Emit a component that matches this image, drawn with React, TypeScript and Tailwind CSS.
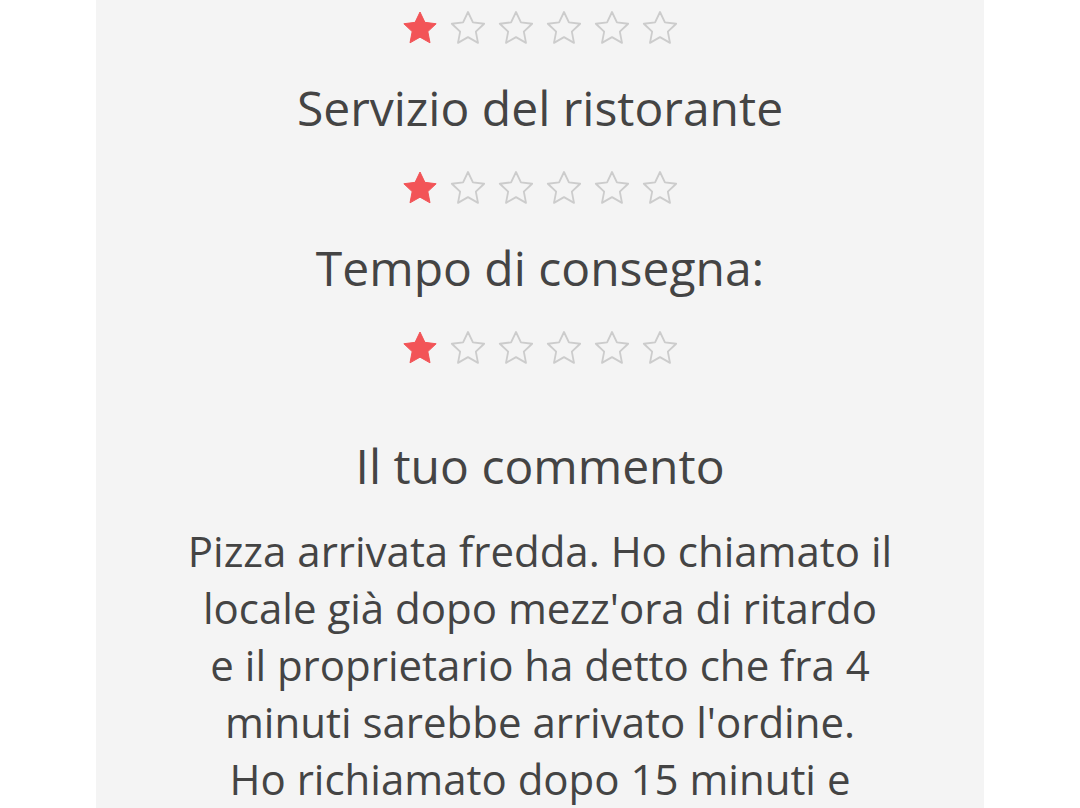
const ratings = ["Servizio del ristorante", "Tempo di consegna:"]

const commentLines = [
  "Pizza arrivata fredda. Ho chiamato il",
  "locale già dopo mezz'ora di ritardo",
  "e il proprietario ha detto che fra 4",
  "minuti sarebbe arrivato l'ordine.",
  "Ho richiamato dopo 15 minuti e",
]

function Star({ filled }: { filled: boolean }) {
  return (
    <svg viewBox="0 0 24 24" className="w-10 h-10">
      <path
        d="M12 2.4l2.95 6.2 6.75.85-5 4.7 1.3 6.75L12 17.5l-6 3.4 1.3-6.75-5-4.7 6.75-.85z"
        fill={filled ? "#f25457" : "none"}
        stroke={filled ? "#f25457" : "#cccccc"}
        strokeWidth={filled ? 0.6 : 1.1}
        strokeLinejoin="round"
      />
    </svg>
  )
}

function Stars({ value }: { value: number }) {
  return (
    <div className="flex justify-center gap-2 h-10">
      {[1, 2, 3, 4, 5, 6].map((n) => (
        <Star key={n} filled={n <= value} />
      ))}
    </div>
  )
}

export default function App() {
  return (
    <div className="min-h-screen bg-white" style={{ fontFamily: "'Open Sans', 'Noto Sans', sans-serif" }}>
      <div className="mx-auto w-[888px] min-h-screen bg-[#f4f4f4] pt-2 text-[#444444] text-center">
        <Stars value={1} />
        {ratings.map((label) => (
          <div key={label}>
            <h3 className="h-[120px] flex items-center justify-center text-[48px]">{label}</h3>
            <Stars value={1} />
          </div>
        ))}
        <h2 className="mt-[68px] text-[48px] leading-[60px]">Il tuo commento</h2>
        <p className="mt-[26px] text-[42px] leading-[57px]">
          {commentLines.map((line, i) => (
            <span key={i} className="block">
              {line}
            </span>
          ))}
        </p>
      </div>
    </div>
  )
}
